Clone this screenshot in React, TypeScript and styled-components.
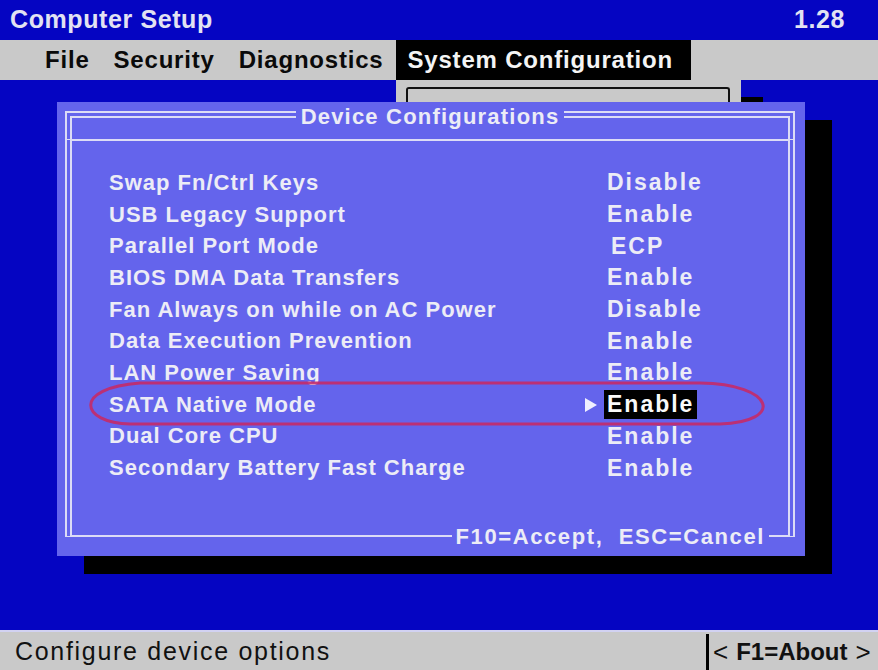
import React from 'react';
import styled, { createGlobalStyle } from 'styled-components';

const GlobalStyle = createGlobalStyle`
  html, body {
    margin: 0;
    padding: 0;
    background: #0505c2;
  }
  * {
    box-sizing: border-box;
  }
`;

const Screen = styled.div`
  width: 878px;
  height: 670px;
  display: flex;
  flex-direction: column;
  background: #0505c2;
  font-family: 'Liberation Sans', Arial, sans-serif;
  overflow: hidden;
`;

const TitleBar = styled.div`
  height: 40px;
  display: flex;
  align-items: center;
  justify-content: space-between;
  padding: 0 33px 2px 10px;
  color: #e2e2f2;
  font-size: 25px;
  font-weight: bold;
  letter-spacing: 0.6px;
`;

const MenuBar = styled.div`
  height: 40px;
  display: flex;
  align-items: stretch;
  padding-left: 33px;
  background: #c9c9c9;
  position: relative;
  z-index: 1;
`;

const MenuItem = styled.div<{ $active?: boolean }>`
  position: relative;
  display: flex;
  align-items: center;
  padding: ${(p) => (p.$active ? '0 18px 0 12px' : '0 12px')};
  font-size: 24px;
  font-weight: bold;
  letter-spacing: 0.8px;
  color: ${(p) => (p.$active ? '#f4f4f4' : '#0a0a0a')};
  background: ${(p) => (p.$active ? '#000' : 'transparent')};
`;

const Dropdown = styled.div`
  position: absolute;
  top: 100%;
  left: 0;
  width: 345px;
  height: 160px;
  padding: 7px 11px 0 10px;
  background: #c9c9c9;
  box-shadow: 22px 17px 0 #000;
`;

const DropdownInner = styled.div`
  height: 100%;
  border: 2px solid #111;
  border-bottom: none;
  border-radius: 3px 3px 0 0;
`;

const Main = styled.div`
  flex: 1;
  padding: 22px 0 0 57px;
  position: relative;
  z-index: 2;
`;

const Dialog = styled.div`
  position: relative;
  width: 748px;
  height: 454px;
  display: flex;
  flex-direction: column;
  padding: 9px 10px 6px 8px;
  background: #6464ec;
  box-shadow: 27px 18px 0 #000;
  color: #ececf6;
`;

const Frame = styled.div`
  flex: 1;
  display: flex;
  flex-direction: column;
`;

const TitleRow = styled.div`
  height: 28px;
  display: flex;
`;

const TopSeg = styled.div<{ $side: 'left' | 'right' }>`
  flex: 1;
  border-top: 7px double #dcdcf6;
  ${(p) => (p.$side === 'left' ? 'border-left' : 'border-right')}: 7px double #dcdcf6;
`;

const Title = styled.div`
  margin-top: -6px;
  padding: 0 5px;
  height: 24px;
  line-height: 24px;
  font-size: 22px;
  font-weight: bold;
  letter-spacing: 1.2px;
  white-space: nowrap;
`;

const Body = styled.div`
  flex: 1;
  padding: 26px 0 0 37px;
  border-top: 2px solid #dcdcf6;
  border-left: 7px double #dcdcf6;
  border-right: 7px double #dcdcf6;
`;

const Row = styled.div`
  height: 31.7px;
  display: grid;
  grid-template-columns: 476px 19px auto;
  align-items: center;
`;

const Label = styled.span`
  font-size: 22px;
  font-weight: bold;
  letter-spacing: 1px;
  white-space: nowrap;
`;

const Marker = styled.span<{ $show: boolean }>`
  width: 0;
  height: 0;
  border-left: 12px solid #f0f0ff;
  border-top: 7px solid transparent;
  border-bottom: 7px solid transparent;
  visibility: ${(p) => (p.$show ? 'visible' : 'hidden')};
`;

const Value = styled.span<{ $selected: boolean; $indent: number }>`
  justify-self: start;
  padding: 2px 3px 2px ${(p) => 3 + p.$indent}px;
  line-height: 25px;
  font-size: 23px;
  font-weight: bold;
  letter-spacing: 2px;
  white-space: nowrap;
  background: ${(p) => (p.$selected ? '#000' : 'transparent')};
  color: ${(p) => (p.$selected ? '#fafafa' : '#ececf6')};
`;

const FooterRow = styled.div`
  height: 26px;
  display: flex;
`;

const BottomSeg = styled.div<{ $side: 'left' | 'right' }>`
  ${(p) => (p.$side === 'left' ? 'flex: 1;' : 'width: 26px;')}
  align-self: flex-start;
  height: 13px;
  border-bottom: 2px solid #dcdcf6;
  ${(p) => (p.$side === 'left' ? 'border-left' : 'border-right')}: 7px double #dcdcf6;
`;

const FooterText = styled.div`
  padding: 0 4px;
  line-height: 26px;
  font-size: 22px;
  font-weight: bold;
  letter-spacing: 1.6px;
  white-space: pre;
`;

const Annotation = styled.svg`
  position: absolute;
  top: 0;
  left: 0;
  width: 100%;
  height: 100%;
  overflow: visible;
  pointer-events: none;
`;

const StatusBar = styled.div`
  height: 40px;
  display: flex;
  align-items: stretch;
  background: #c9c9c9;
  border-top: 2px solid #d2d2f2;
  color: #111;
`;

const StatusText = styled.div`
  flex: 1;
  display: flex;
  align-items: center;
  padding-left: 15px;
  font-size: 25px;
  letter-spacing: 1.7px;
`;

const StatusHelp = styled.div`
  display: flex;
  align-items: center;
  gap: 8px;
  margin-top: 2px;
  padding: 0 6px 0 4px;
  width: 172px;
  border-left: 3px solid #000;
  font-size: 24px;
  font-weight: bold;
  white-space: nowrap;
`;

const Arrow = styled.span`
  font-weight: normal;
  font-size: 26px;
`;

interface Setting {
  label: string;
  value: string;
  selected?: boolean;
  indent?: number;
}

const settings: Setting[] = [
  { label: 'Swap Fn/Ctrl Keys', value: 'Disable' },
  { label: 'USB Legacy Support', value: 'Enable' },
  { label: 'Parallel Port Mode', value: 'ECP', indent: 4 },
  { label: 'BIOS DMA Data Transfers', value: 'Enable' },
  { label: 'Fan Always on while on AC Power', value: 'Disable' },
  { label: 'Data Execution Prevention', value: 'Enable' },
  { label: 'LAN Power Saving', value: 'Enable' },
  { label: 'SATA Native Mode', value: 'Enable', selected: true },
  { label: 'Dual Core CPU', value: 'Enable' },
  { label: 'Secondary Battery Fast Charge', value: 'Enable' },
];

const menu = ['File', 'Security', 'Diagnostics', 'System Configuration'];

function App() {
  return (
    <>
      <GlobalStyle />
      <Screen>
        <TitleBar>
          <span>Computer Setup</span>
          <span>1.28</span>
        </TitleBar>
        <MenuBar>
          {menu.map((item) => {
            const active = item === 'System Configuration';
            return (
              <MenuItem key={item} $active={active}>
                {item}
                {active && (
                  <Dropdown>
                    <DropdownInner />
                  </Dropdown>
                )}
              </MenuItem>
            );
          })}
        </MenuBar>
        <Main>
          <Dialog>
            <Frame>
              <TitleRow>
                <TopSeg $side="left" />
                <Title>Device Configurations</Title>
                <TopSeg $side="right" />
              </TitleRow>
              <Body>
                {settings.map((s) => (
                  <Row key={s.label}>
                    <Label>{s.label}</Label>
                    <Marker $show={!!s.selected} />
                    <Value $selected={!!s.selected} $indent={s.indent ?? 0}>
                      {s.value}
                    </Value>
                  </Row>
                ))}
              </Body>
              <FooterRow>
                <BottomSeg $side="left" />
                <FooterText>F10=Accept,  ESC=Cancel</FooterText>
                <BottomSeg $side="right" />
              </FooterRow>
            </Frame>
            <Annotation viewBox="0 0 748 454" preserveAspectRatio="none">
              <path
                d="M83 281 L643 281 C718 282 728 320 663 322 L73 322 C23 321 15 286 83 281 Z"
                fill="none"
                stroke="#c42a68"
                strokeWidth="3"
                strokeOpacity="0.9"
              />
            </Annotation>
          </Dialog>
        </Main>
        <StatusBar>
          <StatusText>Configure device options</StatusText>
          <StatusHelp>
            <Arrow>&lt;</Arrow>
            <span>F1=About</span>
            <Arrow>&gt;</Arrow>
          </StatusHelp>
        </StatusBar>
      </Screen>
    </>
  );
}

export default App;
